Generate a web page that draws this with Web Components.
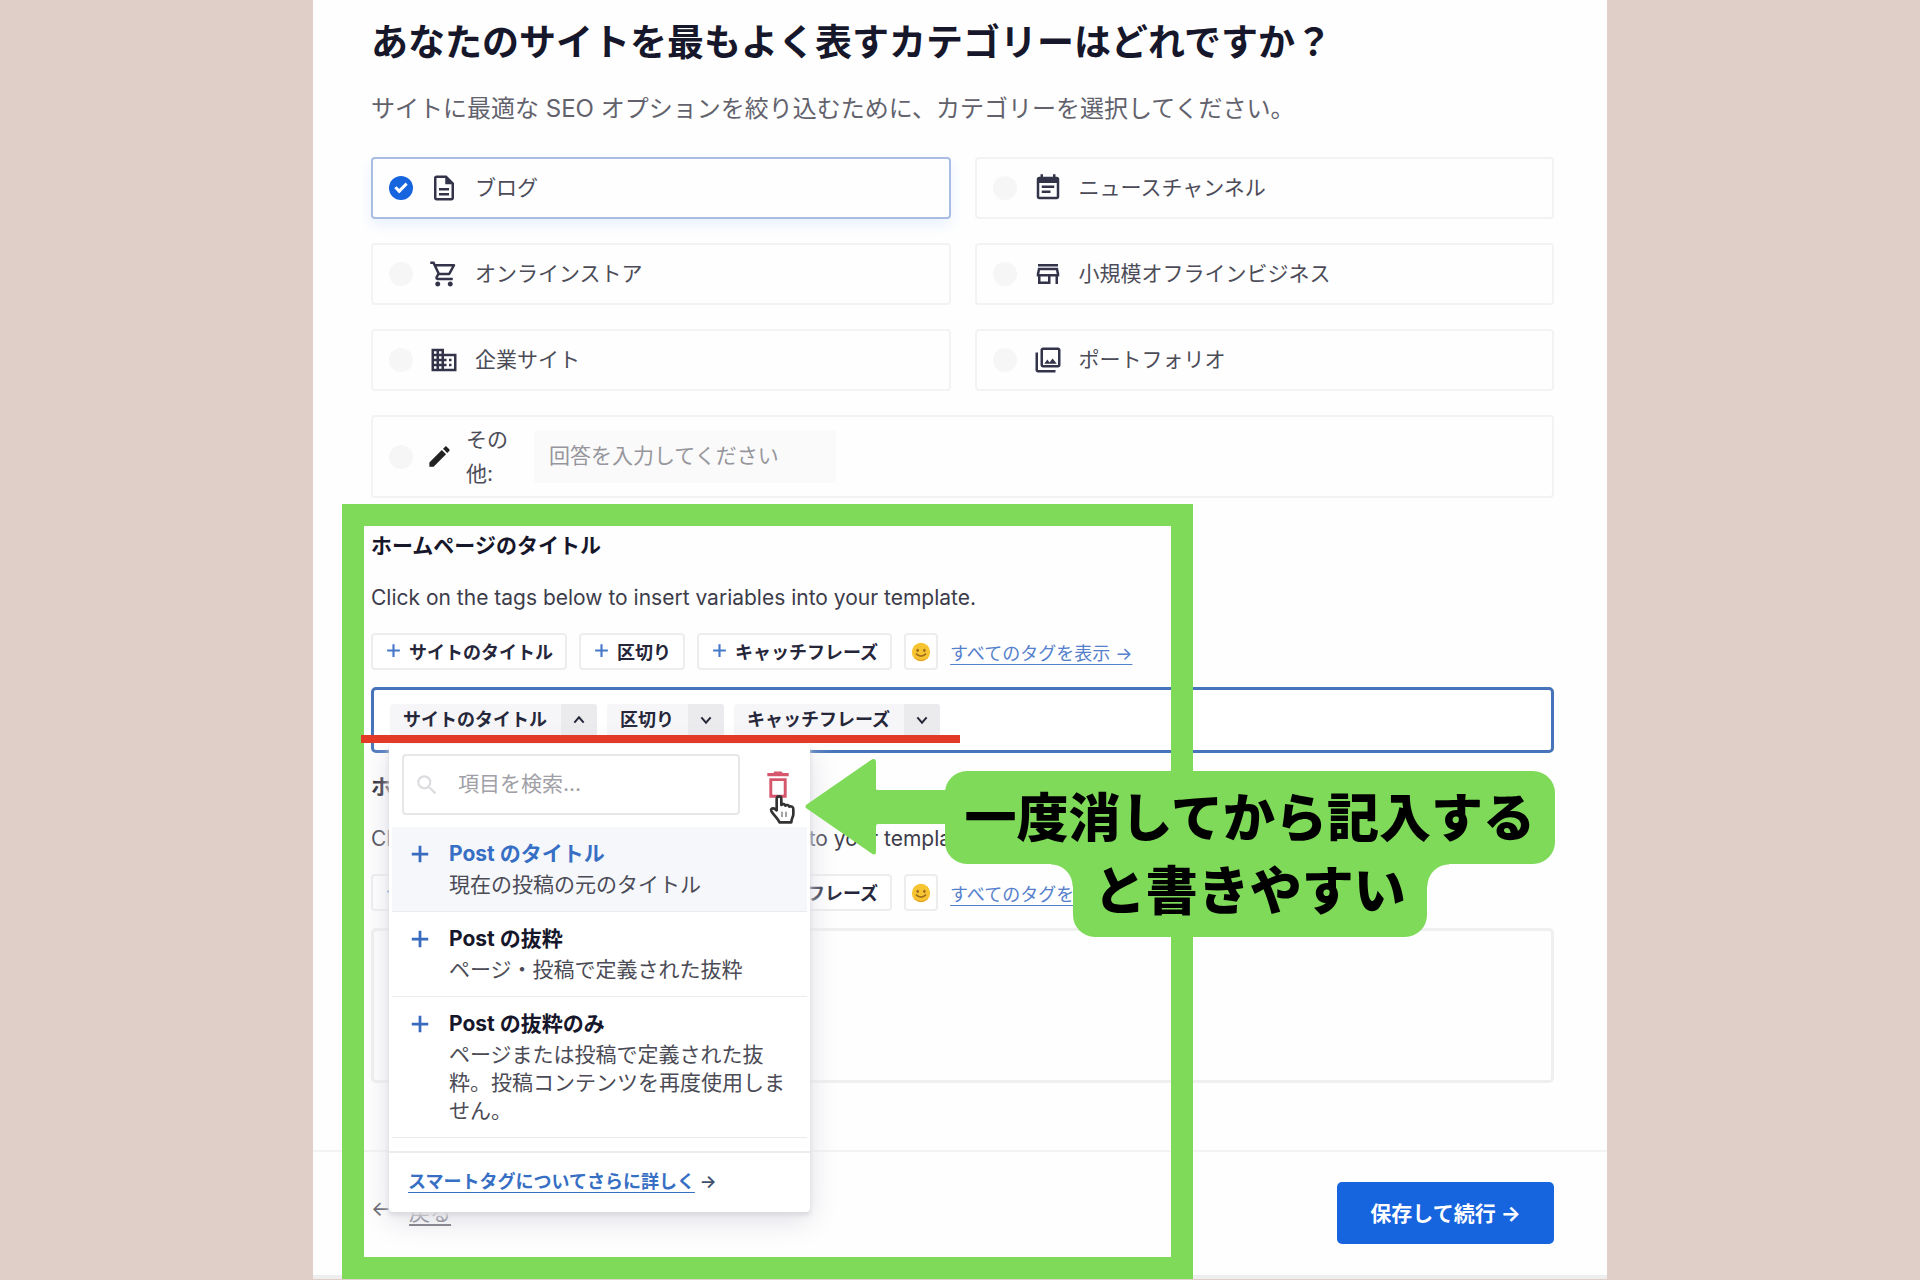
<!DOCTYPE html>
<html lang="ja">
<head>
<meta charset="utf-8">
<title>サイトカテゴリー</title>
<style>
    :root {
        --blue: #1764df;
        --link: #376fc4;
        --ink: #17172b;
        --text: #4c4c58;
        --line: #f3f3f4;
        --green: #7eda58;
        --red: #e33a28;
        --font: Inter, "Noto Sans CJK JP", sans-serif;
    }

    body {
        margin: 0;
        background: #e0cfc8;
        font-family: var(--font);
        color: var(--ink);
    }
</style>
</head>
<body>
<setup-page></setup-page>

<script>
const ICONS = {
    blog: '<path d="M8 16h8v2H8zm0-4h8v2H8zm6-10H6c-1.1 0-2 .9-2 2v16c0 1.1.89 2 1.99 2H18c1.1 0 2-.9 2-2V8l-6-6zm4 18H6V4h7v5h5v11z"/>',
    cart: '<path d="M15.55 13c.75 0 1.41-.41 1.75-1.03l3.58-6.49c.37-.66-.11-1.48-.87-1.48H5.21l-.94-2H1v2h2l3.6 7.59-1.35 2.44C4.52 15.37 5.48 17 7 17h12v-2H7l1.1-2h7.45zM6.16 6h12.15l-2.76 5H8.53L6.16 6zM7 18c-1.1 0-1.99.9-1.99 2S5.9 22 7 22s2-.9 2-2-.9-2-2-2zm10 0c-1.1 0-1.99.9-1.99 2s.89 2 1.99 2 2-.9 2-2-.9-2-2-2z"/>',
    company: '<path d="M12 7V3H2v18h20V7H12zM6 19H4v-2h2v2zm0-4H4v-2h2v2zm0-4H4V9h2v2zm0-4H4V5h2v2zm4 12H8v-2h2v2zm0-4H8v-2h2v2zm0-4H8V9h2v2zm0-4H8V5h2v2zm10 12h-8v-2h2v-2h-2v-2h2v-2h-2V9h8v10zm-2-8h-2v2h2v-2zm0 4h-2v2h2v-2z"/>',
    news: '<path d="M17 10H7v2h10v-2zm2-7h-1V1h-2v2H8V1H6v2H5c-1.11 0-1.99.9-1.99 2L3 19c0 1.1.89 2 2 2h14c1.1 0 2-.9 2-2V5c0-1.1-.9-2-2-2zm0 16H5V8h14v11zm-5-5H7v2h7v-2z"/>',
    store: '<path d="M18.36 9l.6 3H5.04l.6-3h12.72M20 4H4v2h16V4zm0 3H4l-1 5v2h1v6h10v-6h4v6h2v-6h1v-2l-1-5zM6 18v-4h6v4H6z"/>',
    photos: '<path d="M20 4v12H8V4h12m0-2H8c-1.1 0-2 .9-2 2v12c0 1.1.9 2 2 2h12c1.1 0 2-.9 2-2V4c0-1.1-.9-2-2-2zm-8.5 9.67l1.69 2.26 2.48-3.1L19 15H9zM2 6v14c0 1.1.9 2 2 2h14v-2H4V6H2z"/>',
    pencil: '<path d="M3 17.25V21h3.75L17.81 9.94l-3.75-3.75L3 17.25zM20.71 7.04c.39-.39.39-1.02 0-1.41l-2.34-2.34c-.39-.39-1.02-.39-1.41 0l-1.83 1.83 3.75 3.75 1.83-1.83z"/>',
    trash: '<path d="M5.5 7v14.5h13V7zM7.7 9h8.6v10.3H7.7zM15.5 3l-.8-1.2H9.3L8.5 3H4v2.4h16V3z" fill-rule="evenodd"/>',
    search: '<path d="M15.5 14h-.79l-.28-.27A6.47 6.47 0 0 0 16 9.5 6.5 6.5 0 1 0 9.5 16c1.61 0 3.09-.59 4.23-1.57l.27.28v.79l5 4.99L20.49 19l-4.99-5zm-6 0C7.01 14 5 11.99 5 9.5S7.01 5 9.5 5 14 7.01 14 9.5 11.99 14 9.5 14z"/>',
    plus: '<path d="M10.5 3h3v7.5H21v3h-7.5V21h-3v-7.5H3v-3h7.5z"/>',
    up: '<path d="M5 16l7-8 7 8" fill="none" stroke="currentColor" stroke-width="3"/>',
    down: '<path d="M5 8l7 8 7-8" fill="none" stroke="currentColor" stroke-width="3"/>',
    smile: '<circle cx="12" cy="12" r="11" fill="#f6c431"/><path d="M3 18a11 11 0 0 0 18 0 13 13 0 0 1-18 0z" fill="#e39a2c"/><ellipse cx="8" cy="10" rx="1.5" ry="2" fill="#9a6a20"/><ellipse cx="16" cy="10" rx="1.5" ry="2" fill="#9a6a20"/><path d="M6 14q6 6 12 0" fill="none" stroke="#a06c1c" stroke-width="2"/>',
    hand: '<path d="M8 13V4.500c0-2.600 3.500-2.600 3.500 0V9c1-1 2.600-.8 3 .5 1-.9 2.600-.6 3 .8 1.300-.8 3 0 3 1.700v4c0 2-1.500 3-1.500 6H10c-.5-2.500-5-6-6-8.500-.6-1.800 1.500-2.600 2.600-1.500z" fill="#fff" stroke="#333" stroke-width="2" stroke-linejoin="round"/><path d="M12 14v4M15 14v4" stroke="#777" stroke-width="1"/>'
};

class BaseElement extends HTMLElement {
    constructor() {
        super();
        this.attachShadow({ mode: 'open' });
    }

    connectedCallback() {
        this.shadowRoot.innerHTML = `
            <style>
                *, *::before, *::after { box-sizing: border-box; }
                button, input, textarea { font: inherit; color: inherit; margin: 0; }
                a { color: inherit; text-underline-offset: 4px; }
                ${this.css()}
            </style>
            ${this.html()}
        `;
    }
}

class SvgIcon extends BaseElement {
    css() {
        return `
            :host { display: block; flex: none; width: var(--size, 30px); height: var(--size, 30px); }
            svg { display: block; width: 100%; height: 100%; fill: currentColor; }
        `;
    }

    html() {
        return `<svg viewBox="0 0 24 24" aria-hidden="true">${ICONS[this.getAttribute('name')]}</svg>`;
    }
}

class CategoryOption extends BaseElement {
    css() {
        return `
            :host {
                display: flex;
                align-items: center;
                box-sizing: border-box;
                min-height: 62px;
                padding-left: 16px;
                border: 2px solid var(--line);
                border-radius: 4px;
                color: var(--text);
                font-size: 21px;
                line-height: 34px;
            }
            :host([checked]) {
                border-color: #a9bce2;
                box-shadow: 0 6px 14px #e9f0fd;
            }
            :host([other]) { grid-column: 1 / -1; min-height: 83px; }
            label { display: flex; flex: 1; align-items: center; gap: 16px; }
            :host([other]) label { flex: none; gap: 13px; }
            :host([other]) .text { width: 52px; }
            :host([other]) svg-icon { --size: 27px; color: #222; }
            svg-icon { color: #33334a; }
            input[type="radio"] {
                appearance: none;
                flex: none;
                display: grid;
                place-items: center;
                width: 24px;
                height: 24px;
                border-radius: 50%;
                background: #f6f6f6;
            }
            input[type="radio"]:checked { background: var(--blue); }
            input[type="radio"]:checked::after {
                content: "";
                width: 12px;
                height: 7px;
                margin-bottom: 4px;
                border: solid #fff;
                border-width: 0 0 3px 3px;
                transform: rotate(-45deg);
            }
        `;
    }

    html() {
        return `
            <label>
                <input type="radio" name="category" ${this.hasAttribute('checked') ? 'checked' : ''}>
                <svg-icon name="${this.getAttribute('icon')}"></svg-icon>
                <span class="text"><slot></slot></span>
            </label>
            <slot name="answer"></slot>
        `;
    }
}

class AnswerInput extends BaseElement {
    css() {
        return `
            :host { display: block; width: 302px; margin-left: 16px; }
            input {
                width: 100%;
                height: 53px;
                padding: 0 15px 2px;
                border: 0;
                border-radius: 3px;
                background: #fafafa;
            }
            input::placeholder { color: #96969c; }
        `;
    }

    html() {
        return `<input type="text" aria-label="その他" placeholder="回答を入力してください">`;
    }
}

class TagButton extends BaseElement {
    css() {
        return `
            :host { display: block; }
            button {
                display: flex;
                align-items: center;
                gap: 7px;
                height: 37px;
                padding: 0 12px 2px;
                border: 2px solid #ededf0;
                border-radius: 4px;
                background: #fff;
                color: #26263a;
                font-size: 18px;
                font-weight: 600;
                white-space: nowrap;
            }
            svg-icon { --size: 17px; color: #4678c8; }
            :host([emoji]) button { padding: 0 5px; }
            :host([emoji]) svg-icon { --size: 20px; }
        `;
    }

    html() {
        if (this.hasAttribute('emoji')) {
            return `<button aria-label="絵文字"><svg-icon name="smile"></svg-icon></button>`;
        }
        return `<button><svg-icon name="plus"></svg-icon><slot></slot></button>`;
    }
}

class SmartTag extends BaseElement {
    css() {
        return `
            :host {
                display: flex;
                height: 32px;
                border-radius: 3px;
                overflow: hidden;
                background: #f6f6f8;
                color: #26263a;
                font-size: 18px;
                font-weight: 600;
                line-height: 32px;
                white-space: nowrap;
            }
            span { padding: 0 14px 0 13px; }
            button {
                display: grid;
                place-items: center;
                width: 36px;
                padding: 0;
                border: 0;
                background: #ebebee;
            }
            svg-icon { --size: 16px; }
        `;
    }

    html() {
        const open = this.hasAttribute('open');
        return `
            <span><slot></slot></span>
            <button aria-label="タグを変更" aria-expanded="${open}"><svg-icon name="${open ? 'up' : 'down'}"></svg-icon></button>
        `;
    }
}

class TemplateField extends BaseElement {
    css() {
        return `
            :host { display: block; }
            h2 { margin: 0 0 22px; font-size: 21px; line-height: 32px; font-weight: 700; }
            p { margin: 0 0 21px; color: #3c3c4a; font-size: 21px; line-height: 28px; }
            .tags { display: flex; align-items: center; gap: 12px; margin-bottom: 17px; }
            a { color: #5580cc; font-size: 18px; white-space: nowrap; }
        `;
    }

    html() {
        return `
            <h2>${this.getAttribute('label')}</h2>
            <p>Click on the tags below to insert variables into your template.</p>
            <div class="tags">
                <tag-button>サイトのタイトル</tag-button>
                <tag-button>区切り</tag-button>
                <tag-button>キャッチフレーズ</tag-button>
                <tag-button emoji></tag-button>
                <a href="#tags">すべてのタグを表示 →</a>
            </div>
            <slot></slot>
        `;
    }
}

class TagEditor extends BaseElement {
    css() {
        return `
            :host { display: block; position: relative; z-index: 1; }
            .box {
                display: flex;
                align-items: center;
                gap: 10px;
                height: 66px;
                padding: 0 16px;
                border: 3px solid #4673b9;
                border-radius: 5px;
                background: #fff;
            }
            ::slotted(smart-tag-menu) { position: absolute; top: 57px; left: 18px; }
        `;
    }

    html() {
        return `
            <div class="box" role="group" aria-label="ホームページのタイトル"><slot></slot></div>
            <slot name="menu"></slot>
        `;
    }
}

class TextBox extends BaseElement {
    css() {
        return `
            :host { display: block; }
            textarea {
                display: block;
                width: 100%;
                height: 155px;
                padding: 12px;
                border: 3px solid #efefef;
                border-radius: 5px;
                background: #fefefe;
                resize: none;
            }
        `;
    }

    html() {
        return `<textarea aria-label="${this.getAttribute('label')}"></textarea>`;
    }
}

class MenuItem extends BaseElement {
    css() {
        return `
            :host { display: block; border-bottom: 1px solid #ebebed; }
            button {
                display: flex;
                align-items: flex-start;
                gap: 21px;
                width: 100%;
                padding: 10px 8px 12px 20px;
                border: 0;
                background: none;
                text-align: left;
                font-size: 21px;
            }
            :host([active]) button { background: #f5f7fb; }
            :host([active]) b { color: var(--link); }
            b { display: block; line-height: 34px; font-weight: 700; }
            span { display: block; color: #4b4b56; line-height: 28px; }
            svg-icon { --size: 22px; margin: 6px -3px; color: #386bbd; }
        `;
    }

    html() {
        return `
            <button>
                <svg-icon name="plus"></svg-icon>
                <div><b>${this.getAttribute('label')}</b><span><slot></slot></span></div>
            </button>
        `;
    }
}

class SmartTagMenu extends BaseElement {
    css() {
        return `
            :host {
                display: block;
                box-sizing: border-box;
                width: 421px;
                padding-top: 10px;
                border-radius: 4px;
                background: #fff;
                box-shadow: 0 3px 4px #d9d9de, 0 8px 30px #dfdfe6;
            }
            .top { display: flex; align-items: center; gap: 22px; padding: 0 16px 0 13px; }
            .search {
                display: flex;
                flex: 1;
                align-items: center;
                gap: 18px;
                min-width: 0;
                height: 61px;
                padding-left: 10px;
                border: 2px solid #e7e7ea;
                border-radius: 4px;
            }
            .search svg-icon { --size: 26px; color: #dcdce0; }
            input {
                flex: 1;
                min-width: 0;
                border: 0;
                padding: 0 0 3px;
                background: none;
                font-size: 21px;
            }
            input::placeholder { color: #a0a0a6; }
            .delete {
                position: relative;
                padding: 0;
                border: 0;
                background: none;
                color: #d6566b;
            }
            .delete svg-icon { --size: 32px; }
            .cursor { position: absolute; left: 4px; top: 24px; }
            .list { margin: 12px 3px 13px; }
            footer {
                padding: 15px 19px 16px;
                border-top: 2px solid #ececee;
                color: #40506c;
                font-size: 18px;
                font-weight: 600;
                line-height: 28px;
            }
            a { color: var(--link); }
        `;
    }

    html() {
        return `
            <div class="top">
                <label class="search">
                    <svg-icon name="search"></svg-icon>
                    <input type="text" aria-label="項目を検索" placeholder="項目を検索...">
                </label>
                <button class="delete" aria-label="削除">
                    <svg-icon name="trash"></svg-icon>
                    <svg-icon class="cursor" name="hand"></svg-icon>
                </button>
            </div>
            <div class="list">
                <menu-item active label="Post のタイトル">現在の投稿の元のタイトル</menu-item>
                <menu-item label="Post の抜粋">ページ・投稿で定義された抜粋</menu-item>
                <menu-item label="Post の抜粋のみ">ページまたは投稿で定義された抜粋。投稿コンテンツを再度使用しません。</menu-item>
            </div>
            <footer><a href="#smart-tags">スマートタグについてさらに詳しく</a> →</footer>
        `;
    }
}

class PageFooter extends BaseElement {
    css() {
        return `
            :host {
                display: flex;
                align-items: center;
                justify-content: space-between;
                padding: 30px 53px 31px 58px;
                border-top: 2px solid #f3f3f4;
                border-bottom: 4px solid #eee;
                font-size: 21px;
            }
            .back { display: flex; gap: 18px; padding-bottom: 4px; color: #555560; }
            button {
                width: 217px;
                height: 62px;
                padding: 0 0 3px;
                border: 0;
                border-radius: 5px;
                background: var(--blue);
                color: #fff;
                font-weight: 700;
            }
        `;
    }

    html() {
        return `
            <div class="back"><span>←</span><a href="#back">戻る</a></div>
            <button>保存して続行 →</button>
        `;
    }
}

class CalloutNote extends BaseElement {
    css() {
        return `
            :host {
                display: flex;
                flex-direction: column;
                align-items: center;
                color: #000;
                font-family: "Noto Sans CJK JP", sans-serif;
                font-size: 52px;
                font-weight: 900;
                white-space: nowrap;
            }
            .first {
                padding: 0 20px 6px;
                border-radius: 22px;
                background: var(--green);
                line-height: 87px;
            }
            .second {
                position: relative;
                padding: 0 21px 25px;
                border-radius: 0 0 22px 22px;
                background: var(--green);
                line-height: 48px;
            }
            /* concave corners where the two lines join */
            .second::before, .second::after {
                content: "";
                position: absolute;
                top: 0;
                width: 22px;
                height: 22px;
            }
            .second::before { right: 100%; background: radial-gradient(circle at 0 100%, transparent 21px, var(--green) 22px); }
            .second::after { left: 100%; background: radial-gradient(circle at 100% 100%, transparent 21px, var(--green) 22px); }
            svg { position: absolute; top: -13px; right: calc(100% - 2px); fill: var(--green); }
        `;
    }

    html() {
        return `
            <svg width="142" height="98" viewBox="0 0 142 98" aria-hidden="true">
                <path d="M1 47L66 2q5-3 5 3v26q0 1 2 1h69v34H73q-2 0-2 2v25q0 6-5 2L1 50q-1-1 0-3z"/>
            </svg>
            <div class="first">一度消してから記入する</div>
            <div class="second">と書きやすい</div>
        `;
    }
}

class SetupPage extends BaseElement {
    css() {
        return `
            :host {
                display: block;
                position: relative;
                min-width: 1200px;
                margin: 0 313px;
                background: #fefefe;
            }
            main { padding: 21px 53px 0 58px; }
            h1 { margin: 0 0 26px; font-size: 37px; line-height: 44px; font-weight: 700; }
            .lead { margin: 0 0 30px; color: #62626d; font-size: 24px; line-height: 36px; }
            .options { display: grid; grid-template-columns: 1fr 1fr; gap: 24px; margin-bottom: 32px; }
            template-field { margin-bottom: 18px; }
            page-footer { margin-top: 67px; }
            .frame {
                position: absolute;
                z-index: 2;
                top: 504px;
                right: 414px;
                bottom: 0;
                left: 29px;
                border: 22px solid var(--green);
                pointer-events: none;
            }
            .underline {
                position: absolute;
                z-index: 3;
                top: 735px;
                left: 48px;
                width: 599px;
                height: 8px;
                background: var(--red);
            }
            callout-note { position: absolute; z-index: 3; top: 771px; right: 52px; }
        `;
    }

    html() {
        return `
            <main>
                <h1>あなたのサイトを最もよく表すカテゴリーはどれですか？</h1>
                <p class="lead">サイトに最適な SEO オプションを絞り込むために、カテゴリーを選択してください。</p>
                <div class="options">
                    <category-option icon="blog" checked>ブログ</category-option>
                    <category-option icon="news">ニュースチャンネル</category-option>
                    <category-option icon="cart">オンラインストア</category-option>
                    <category-option icon="store">小規模オフラインビジネス</category-option>
                    <category-option icon="company">企業サイト</category-option>
                    <category-option icon="photos">ポートフォリオ</category-option>
                    <category-option icon="pencil" other>その他:<answer-input slot="answer"></answer-input></category-option>
                </div>
                <template-field label="ホームページのタイトル">
                    <tag-editor>
                        <smart-tag open>サイトのタイトル</smart-tag>
                        <smart-tag>区切り</smart-tag>
                        <smart-tag>キャッチフレーズ</smart-tag>
                        <smart-tag-menu slot="menu"></smart-tag-menu>
                    </tag-editor>
                </template-field>
                <template-field label="ホームページの説明">
                    <text-box label="ホームページの説明"></text-box>
                </template-field>
            </main>
            <page-footer></page-footer>
            <div class="frame"></div>
            <div class="underline"></div>
            <callout-note></callout-note>
        `;
    }
}

customElements.define('svg-icon', SvgIcon);
customElements.define('category-option', CategoryOption);
customElements.define('answer-input', AnswerInput);
customElements.define('tag-button', TagButton);
customElements.define('smart-tag', SmartTag);
customElements.define('template-field', TemplateField);
customElements.define('tag-editor', TagEditor);
customElements.define('text-box', TextBox);
customElements.define('menu-item', MenuItem);
customElements.define('smart-tag-menu', SmartTagMenu);
customElements.define('page-footer', PageFooter);
customElements.define('callout-note', CalloutNote);
customElements.define('setup-page', SetupPage);
</script>
</body>
</html>
